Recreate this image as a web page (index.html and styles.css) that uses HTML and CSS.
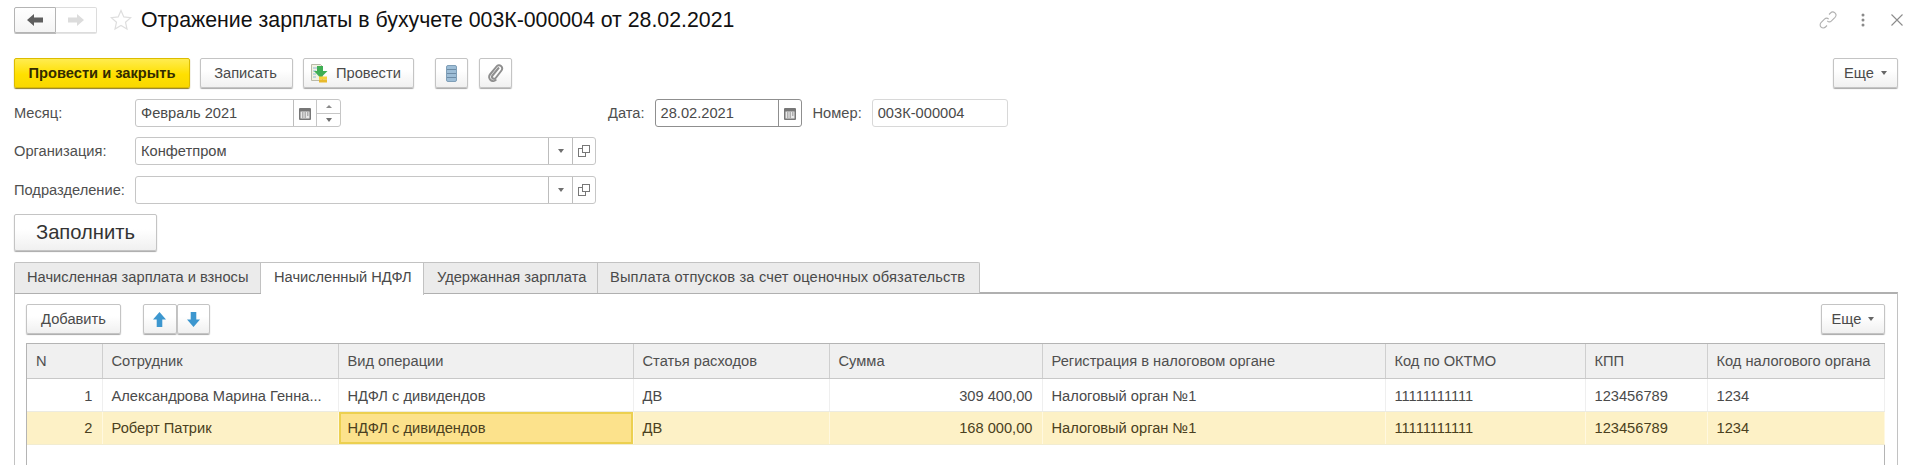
FILE: index.html
```html
<!DOCTYPE html>
<html lang="ru">
<head>
<meta charset="utf-8">
<title>Отражение зарплаты в бухучете</title>
<link rel="stylesheet" href="styles.css">
</head>
<body>
<div class="page">
  <header class="head">
    <div class="nav">
      <button class="nav-btn nav-back"><svg width="18" height="14" viewBox="0 0 18 14"><path d="M1 7 8 1v3.500h9v5H8V13z" fill="#5f5f5f"/></svg></button>
      <button class="nav-btn"><svg width="18" height="14" viewBox="0 0 18 14"><path d="M17 7 10 1v3.500H1v5h9V13z" fill="#dcdcdc"/></svg></button>
    </div>
    <svg class="star" width="22" height="22" viewBox="0 0 22 22"><path d="M11 1.500l2.800 6.400 6.900.7-5.200 4.600 1.500 6.800L11 16.500 5 20l1.500-6.800L1.300 8.600l6.900-.7z" fill="#fff" stroke="#dedede" stroke-width="1.200"/></svg>
    <h1 class="title">Отражение зарплаты в бухучете 003К-000004 от 28.02.2021</h1>
    <div class="head-tools">
      <svg class="tool-link" width="18" height="18" viewBox="0 0 18 18" fill="none" stroke="#b0b0b0" stroke-width="1.100"><path d="M10 3.500 11.500 2a3 3 0 0 1 4.500 4.300l-3.500 3.500a3 3 0 0 1-4.200 0"/><path d="M8 14.500 6.500 16A3 3 0 0 1 2 11.700l3.500-3.500a3 3 0 0 1 4.200 0"/></svg>
      <svg class="tool-dots" width="4" height="14" viewBox="0 0 4 14" fill="#8a8a8a"><circle cx="2" cy="2" r="1.500"/><circle cx="2" cy="7" r="1.500"/><circle cx="2" cy="12" r="1.500"/></svg>
      <svg class="tool-close" width="12" height="12" viewBox="0 0 12 12" stroke="#8c8c8c" stroke-width="1.100"><path d="M.5.500l11 11M11.500.500l-11 11"/></svg>
    </div>
  </header>

  <div class="toolbar">
    <button class="btn btn-primary">Провести и закрыть</button>
    <button class="btn btn-save">Записать</button>
    <button class="btn btn-post">
      <svg width="17" height="19" viewBox="0 0 17 19"><path d="M.5.500h9l2 2v14H.5z" fill="#f2f2e2" stroke="#b9b9a8"/><path d="M2 4h5M2 7h3M2 10h3M2 13h3" stroke="#8fb8d8"/><path d="M6 2h6v5h4.500l-7 7L3 7h3z" fill="#3fae54"/><rect x="8" y="12.500" width="8" height="3" fill="#f5d23c"/><rect x="8" y="15.500" width="8" height="3" fill="#e8b92c"/></svg>
      Провести
    </button>
    <button class="btn btn-icon btn-list"><svg width="11" height="17" viewBox="0 0 11 17"><rect x=".5" y=".5" width="10" height="16" rx="1.500" fill="#9dbdd6" stroke="#7f9fb8"/><path d="M1 4.500h9M1 8.500h9M1 12.500h9" stroke="#6d8ca6"/></svg></button>
    <button class="btn btn-icon btn-clip"><svg width="16" height="18" viewBox="0 0 16 18" fill="none" stroke="#8f8f8f" stroke-width="2"><path d="M11 3.500 4.500 11.500a2 2 0 0 0 3.200 2.500l5.800-7.500a3.200 3.200 0 0 0-5-4L2 10.500a4 4 0 0 0 6.300 5"/></svg></button>
    <button class="btn btn-more btn-more-top">Еще<span class="caret"></span></button>
  </div>

  <div class="form-row row-month">
    <label class="label">Месяц:</label>
    <div class="field field-month">
      <span class="value">Февраль 2021</span>
      <span class="addon addon-cal"><svg width="12" height="13" viewBox="0 0 12 13"><rect y="1" width="12" height="12" rx="1" fill="#777"/><rect x="1.500" y="4.500" width="9" height="7" fill="#e8e8e8"/><path d="M3 6h1.500M5.500 6H7M8 6h1.500M3 8h1.500M5.500 8H7M8 8h1.500M3 10h1.500M5.500 10H7" stroke="#777"/></svg></span>
      <span class="spin"><span class="spin-part"><i class="tri tri-up"></i></span><span class="spin-part"><i class="tri tri-down"></i></span></span>
    </div>
    <label class="label label-date">Дата:</label>
    <div class="field field-date">
      <span class="value">28.02.2021</span>
      <span class="addon addon-cal"><svg width="12" height="13" viewBox="0 0 12 13"><rect y="1" width="12" height="12" rx="1" fill="#777"/><rect x="1.500" y="4.500" width="9" height="7" fill="#e8e8e8"/><path d="M3 6h1.500M5.500 6H7M8 6h1.500M3 8h1.500M5.500 8H7M8 8h1.500M3 10h1.500M5.500 10H7" stroke="#777"/></svg></span>
    </div>
    <label class="label label-num">Номер:</label>
    <div class="field field-num"><span class="value">003К-000004</span></div>
  </div>

  <div class="form-row row-org">
    <label class="label">Организация:</label>
    <div class="field field-wide">
      <span class="value">Конфетпром</span>
      <span class="addon addon-drop"><i class="tri tri-down"></i></span>
      <span class="addon addon-open"><svg width="12" height="12" viewBox="0 0 12 12" fill="#fff" stroke="#777"><rect x=".5" y="3.500" width="7" height="8"/><rect x="4.500" y=".5" width="7" height="7"/></svg></span>
    </div>
  </div>

  <div class="form-row row-dep">
    <label class="label">Подразделение:</label>
    <div class="field field-wide">
      <span class="value"></span>
      <span class="addon addon-drop"><i class="tri tri-down"></i></span>
      <span class="addon addon-open"><svg width="12" height="12" viewBox="0 0 12 12" fill="#fff" stroke="#777"><rect x=".5" y="3.500" width="7" height="8"/><rect x="4.500" y=".5" width="7" height="7"/></svg></span>
    </div>
  </div>

  <button class="btn btn-fill">Заполнить</button>

  <div class="tabs">
    <div class="tab tab-1">Начисленная зарплата и взносы</div>
    <div class="tab tab-2 tab-active">Начисленный НДФЛ</div>
    <div class="tab tab-3">Удержанная зарплата</div>
    <div class="tab tab-4">Выплата отпусков за счет оценочных обязательств</div>
  </div>

  <section class="panel">
    <div class="panel-bar">
      <button class="btn btn-add">Добавить</button>
      <div class="arrows">
        <button class="btn btn-arrow"><svg width="13" height="15" viewBox="0 0 14 16"><path d="M7 0l7 8H10v8H4V8H0z" fill="#3d97cf"/></svg></button>
        <button class="btn btn-arrow"><svg width="13" height="15" viewBox="0 0 14 16"><path d="M7 16l7-8H10V0H4v8H0z" fill="#3d97cf"/></svg></button>
      </div>
      <button class="btn btn-more btn-more-panel">Еще<span class="caret"></span></button>
    </div>
    <div class="grid-wrap">
      <table class="grid">
        <colgroup>
          <col class="c1"><col class="c2"><col class="c3"><col class="c4"><col class="c5"><col class="c6"><col class="c7"><col class="c8"><col class="c9">
        </colgroup>
        <thead>
          <tr>
            <th>N</th><th>Сотрудник</th><th>Вид операции</th><th>Статья расходов</th><th>Сумма</th><th>Регистрация в налоговом органе</th><th>Код по ОКТМО</th><th>КПП</th><th>Код налогового органа</th>
          </tr>
        </thead>
        <tbody>
          <tr class="row-first">
            <td class="num">1</td><td>Александрова Марина Генна...</td><td>НДФЛ с дивидендов</td><td>ДВ</td><td class="num">309 400,00</td><td>Налоговый орган №1</td><td>11111111111</td><td>123456789</td><td>1234</td>
          </tr>
          <tr class="row-selected">
            <td class="num">2</td><td>Роберт Патрик</td><td class="cell-active">НДФЛ с дивидендов</td><td>ДВ</td><td class="num">168 000,00</td><td>Налоговый орган №1</td><td>11111111111</td><td>123456789</td><td>1234</td>
          </tr>
        </tbody>
      </table>
    </div>
  </section>
</div>
</body>
</html>
```
FILE: styles.css
```css
* { box-sizing: border-box; }
html, body { margin: 0; padding: 0; background: #fff; }
body { font-family: "Liberation Sans", Arial, sans-serif; font-size: 14.67px; color: #4a4a4a; }
button { font-family: inherit; }
.page { height: 465px; overflow: hidden; padding: 7px 21px 0 14px; }

.head { display: flex; align-items: center; height: 26px; }
.nav { display: flex; width: 83px; height: 26px; }
.nav-btn { flex: 1; display: flex; align-items: center; justify-content: center; padding: 0; background: #fff; border: 1px solid #dcdcdc; border-radius: 0 2px 2px 0; border-left: 0; box-shadow: 0 1px 0 #e4e4e4; }
.nav-back { border: 1px solid #b4b4b4; border-radius: 2px 0 0 2px; background: linear-gradient(#fff, #f4f4f4); box-shadow: 0 1px 0 #bcbcbc; }
.star { margin-left: 13px; }
.title { margin: 0 0 0 9px; font-size: 21.3px; font-weight: 400; color: #111; white-space: nowrap; flex: 1; }
.head-tools { display: flex; align-items: center; }
.tool-dots { margin-left: 24px; }
.tool-close { margin-left: 26px; margin-right: -5px; }

.btn { height: 30px; padding: 0; font-size: 14.67px; color: #4a4a4a; background: linear-gradient(#fff 40%, #f0f0f0); border: 1px solid #c4c4c4; border-radius: 2px; box-shadow: 0 1px 1px #a8a8a8; display: inline-flex; align-items: center; justify-content: center; }
.toolbar { display: flex; align-items: center; margin-top: 25px; }
.btn-primary { width: 176px; font-weight: 700; color: #332c00; background: linear-gradient(#ffec50, #ffe000 55%, #f9d800); border-color: #dcbc00; box-shadow: 0 1px 1px #8f7c20; }
.btn-save { width: 93px; margin-left: 10px; padding-right: 2px; }
.btn-post { width: 111px; margin-left: 10px; gap: 8px; justify-content: flex-start; padding-left: 7px; }
.btn-icon { width: 33px; }
.btn-list { margin-left: 21px; }
.btn-clip { margin-left: 11px; }
.btn-more { width: 65px; }
.btn-more-top { margin-left: auto; margin-right: 0; }
.caret { display: inline-block; margin-left: 7px; border: 3.500px solid transparent; border-top: 4px solid #666; border-bottom: 0; }

.form-row { display: flex; align-items: center; height: 28px; }
.row-month { margin-top: 11px; }
.row-org { margin-top: 10px; }
.row-dep { margin-top: 11px; }
.label { width: 121px; flex: none; color: #4f4f4f; }
.field { height: 28px; display: flex; align-items: stretch; background: #fff; border: 1px solid #c6c6c6; border-radius: 3px; }
.value { flex: 1; padding-left: 5px; line-height: 26px; color: #4a4a4a; white-space: nowrap; }
.addon { flex: none; display: flex; align-items: center; justify-content: center; border-left: 1px solid #bdbdbd; }
.field-month { width: 206px; }
.field-month .addon-cal { width: 23px; }
.spin { flex: none; width: 24px; display: flex; flex-direction: column; border-left: 1px solid #c6c6c6; }
.spin-part { flex: 1; display: flex; align-items: center; justify-content: center; }
.spin-part + .spin-part { border-top: 1px solid #c6c6c6; }
.tri { display: block; border: 3px solid transparent; }
.tri-up { border-top: 0; border-bottom: 3px solid #8a8a8a; }
.tri-down { border-bottom: 0; border-top: 4px solid #6f6f6f; }
.label-date { width: auto; margin-left: 267px; }
.field-date { width: 147px; margin-left: 10px; border-color: #8f8f8f; }
.field-date .addon-cal { width: 23px; border-left-color: #8f8f8f; }
.label-num { width: auto; margin-left: 11px; }
.field-num { width: 136px; margin-left: 10px; border-color: #d8d8d8; }
.field-wide { width: 461px; }
.addon-drop { width: 24px; }
.addon-open { width: 23px; }

.btn-fill { display: flex; width: 143px; height: 37px; margin-top: 10px; font-size: 20.2px; color: #333; }

.tabs { display: flex; height: 32px; margin-top: 11px; }
.tab { height: 31px; line-height: 29px; padding-left: 12px; background: #ebebeb; border: 1px solid #c2c2c2; border-left: 0; border-bottom: 0; white-space: nowrap; color: #4a4a4a; }
.tab-1 { width: 247px; border-left: 1px solid #c2c2c2; border-radius: 2px 0 0 0; }
.tab-2 { width: 163px; height: 33px; background: #fff; position: relative; z-index: 1; padding-left: 13px; }
.tab-3 { width: 174px; padding-left: 13px; }
.tab-4 { width: 382px; border-radius: 0 2px 0 0; letter-spacing: .15px; }

.panel { margin-top: -2px; height: 200px; padding: 10px 12px 0 11px; border: 1px solid #c2c2c2; border-top: 2px solid #b0b0b0; }
.panel-bar { display: flex; align-items: center; }
.btn-add { width: 95px; }
.arrows { display: flex; margin-left: 22px; }
.btn-arrow { width: 33.500px; }
.btn-more-panel { width: 64px; margin-left: auto; }
.grid-wrap { margin-top: 9px; height: 160px; border: 1px solid #b4b4b4; border-bottom: 0; }
.grid { width: 100%; table-layout: fixed; border-collapse: collapse; }
.c1 { width: 75px; } .c2 { width: 236px; } .c3 { width: 295px; } .c4 { width: 196px; } .c5 { width: 213px; } .c6 { width: 343px; } .c7 { width: 200px; } .c8 { width: 122px; } .c9 { width: 177px; }
.grid th { height: 34px; padding: 0 9px; font-weight: 400; text-align: left; color: #4f4f4f; background: #f0f0f0; border-right: 1px solid #cfcfcf; border-bottom: 1px solid #c8c8c8; white-space: nowrap; overflow: hidden; }
.grid td { height: 33px; padding: 0 9px; color: #4a4a4a; border-right: 1px solid #efefef; border-bottom: 1px solid #ecebe2; white-space: nowrap; overflow: hidden; }
.grid td.num { text-align: right; }
.row-first td { padding-top: 2px; }
.row-selected td { background: #fdf1c6; border-right-color: #fff8e0; border-bottom-color: #f2ecd0; color: #4a4020; }
.grid td.cell-active { background: #fce28c; box-shadow: inset 0 0 0 2px #ecd050; }
```
